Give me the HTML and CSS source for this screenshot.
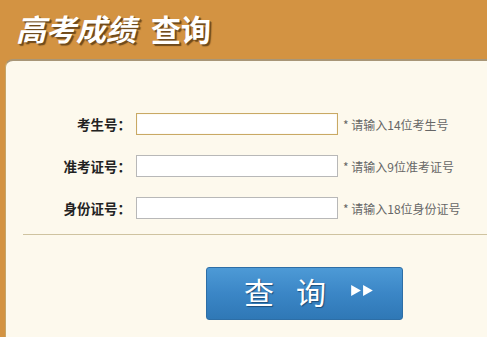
FILE: index.html
```html
<!DOCTYPE html>
<html lang="zh-CN">
<head>
    <meta charset="UTF-8">
    <title>高考成绩查询</title>
    <link rel="stylesheet" href="styles.css">
</head>
<body>
    <header class="top">
        <h1>高考成绩<span class="upright">查询</span></h1>
    </header>
    <div class="panel">
        <form class="query-form">
            <div class="row">
                <label>考生号：</label>
                <input type="text" class="field active">
                <span class="hint">* 请输入14位考生号</span>
            </div>
            <div class="row">
                <label>准考证号：</label>
                <input type="text" class="field">
                <span class="hint">* 请输入9位准考证号</span>
            </div>
            <div class="row">
                <label>身份证号：</label>
                <input type="text" class="field">
                <span class="hint">* 请输入18位身份证号</span>
            </div>
            <div class="divider"></div>
            <div class="actions">
                <button type="button" class="btn-query">
                    <span class="btn-char">查</span><span class="btn-char">询</span>
                    <svg class="arrows" width="22" height="12" viewBox="0 0 22 12">
                        <path d="M1 1 L10 6 L1 11 Z M12 1 L21 6 L12 11 Z" fill="#fff"/>
                    </svg>
                </button>
            </div>
        </form>
    </div>
</body>
</html>
```

FILE: styles.css
```css
body {
    margin: 0;
    background: #d39342;
    font-family: "Noto Sans CJK SC", "Liberation Sans", sans-serif;
    height: 337px;
    overflow: hidden;
}
.top {
    height: 59px;
    padding-left: 16px;
}
.top h1 {
    margin: 0;
    padding-top: 7px;
    font-size: 30px;
    line-height: 42px;
    color: #fff;
    font-style: italic;
    font-weight: bold;
    text-shadow: 2px 2px 1px #6e4a1c, 1px 1px 0 #8a6028;
}
.top h1 .upright {
    font-style: normal;
    margin-left: 15px;
}
.panel {
    margin-left: 5px;
    background: #fdf9ed;
    border-top: 2px solid #a89677;
    border-left: 1px solid #c6a66a;
    border-top-left-radius: 8px;
    height: 280px;
}
.query-form {
    padding-top: 52px;
}
.row {
    display: flex;
    align-items: center;
    height: 22px;
    margin-bottom: 20px;
}
.row label {
    width: 125px;
    text-align: right;
    font-size: 13.5px;
    font-weight: bold;
    color: #222;
}
.field {
    width: 200px;
    height: 20px;
    margin: 0 0 0 5px;
    padding: 0;
    border: 1px solid #b8b8b8;
    background: #fff;
    box-sizing: content-box;
}
.field.active {
    border-color: #c9a964;
    box-shadow: inset 0 0 1px #e0cc98;
}
.hint {
    margin-left: 5px;
    font-size: 12px;
    color: #666;
}
.divider {
    margin: -5px 0 0 17px;
    border-top: 1px solid #cfc3a0;
}
.actions {
    padding: 32px 0 0 200px;
}
.btn-query {
    display: flex;
    align-items: center;
    width: 197px;
    height: 53px;
    border: 1px solid #2d6ea6;
    border-radius: 3px;
    background: linear-gradient(#4d9ad6, #3b86c6 50%, #2f78b6);
    color: #fff;
    font-family: "Noto Sans CJK SC", sans-serif;
    font-size: 30px;
    padding: 0 0 6px 37px;
    text-shadow: 1px 1px 1px #1d4f7c;
}
.btn-char {
    margin-right: 22px;
    line-height: 1;
}
.arrows {
    margin-left: 2px;
    width: 24px;
    height: 13px;
}
```
